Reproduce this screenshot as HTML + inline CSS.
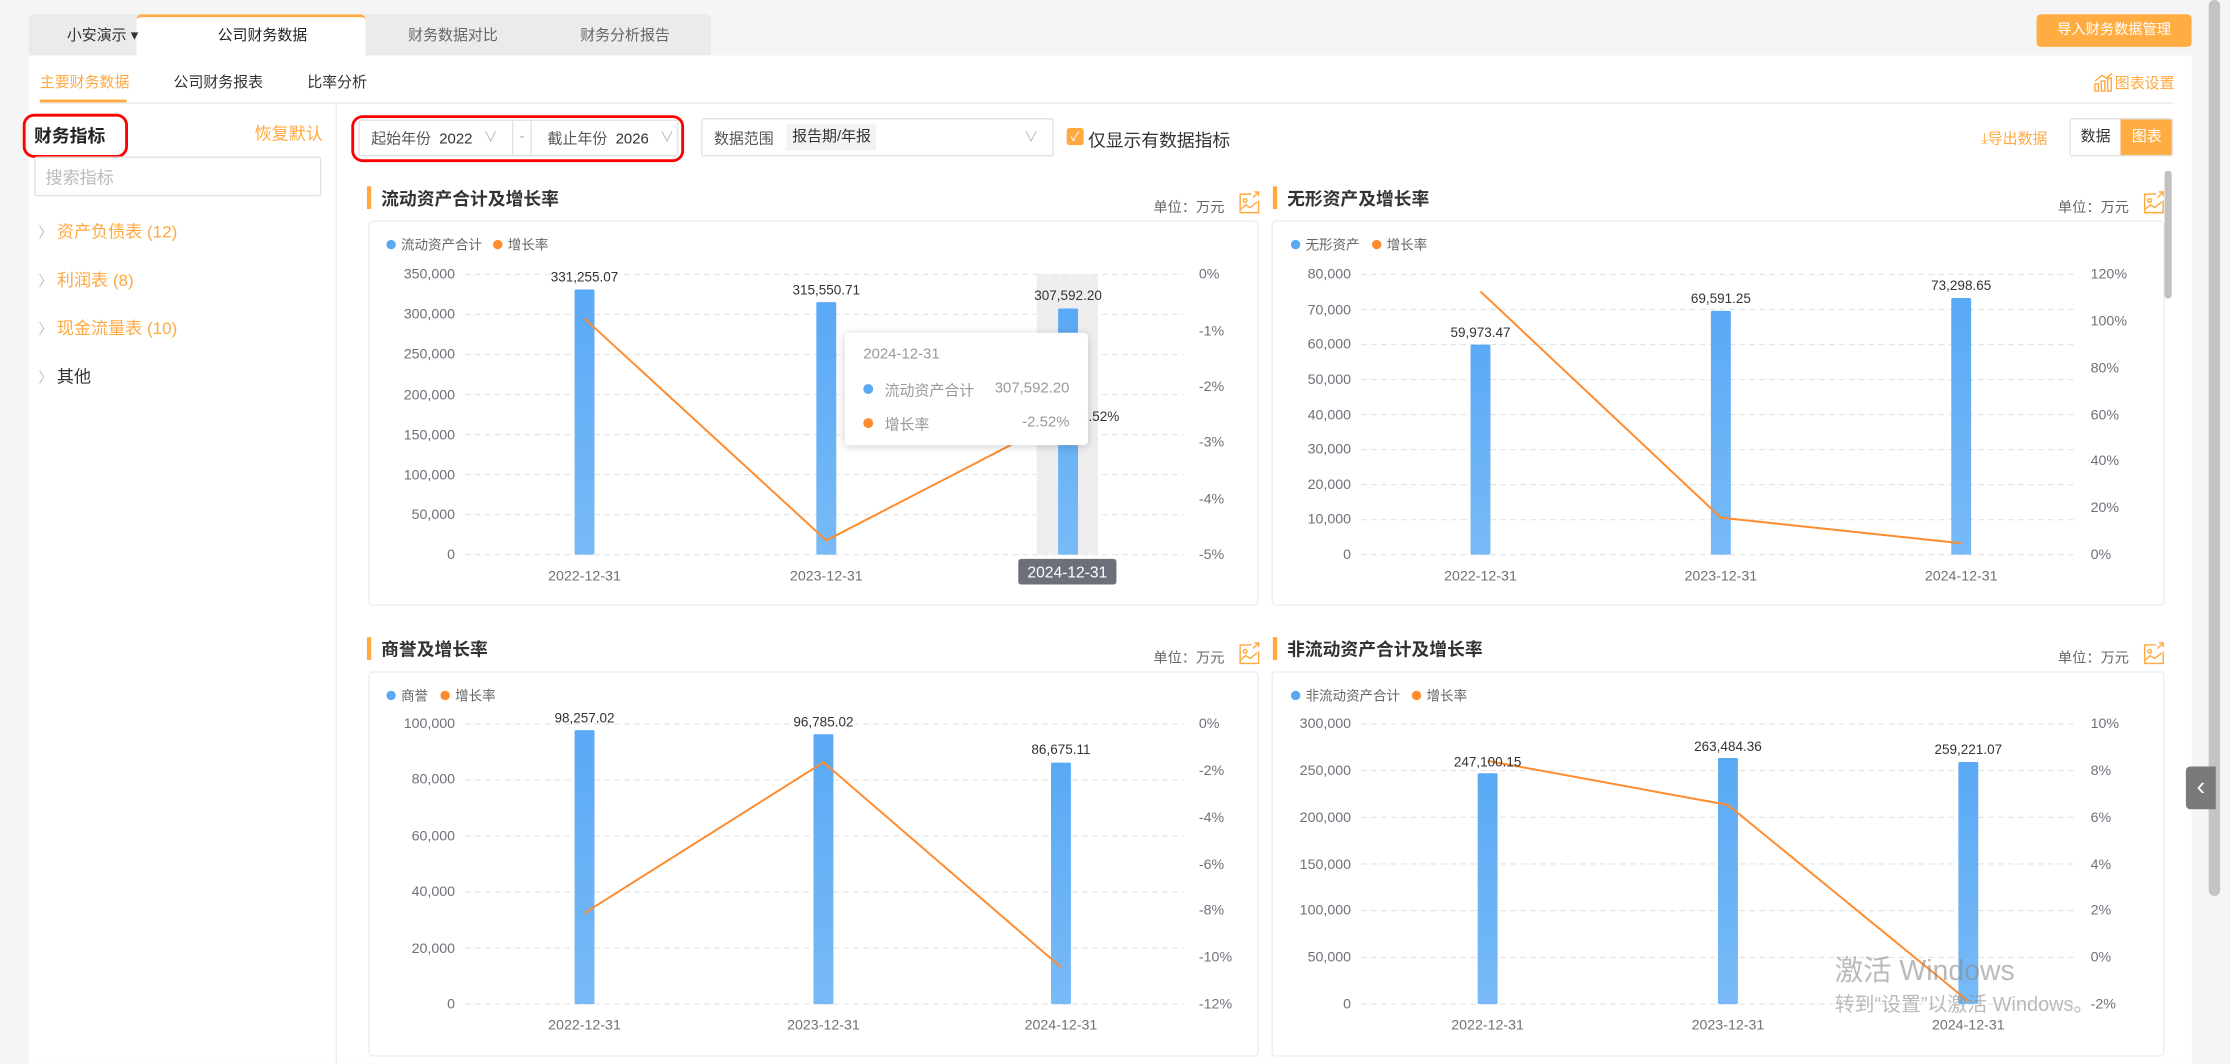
<!DOCTYPE html>
<html><head><meta charset="utf-8"><style>
*{margin:0;padding:0;box-sizing:border-box}
html,body{width:2230px;height:1064px;overflow:hidden;background:#f5f5f5}
#s{position:absolute;left:0;top:0;width:1568px;height:748px;transform:scale(1.42219);transform-origin:0 0;font-family:"Liberation Sans","Noto Sans CJK SC",sans-serif;color:#333;font-size:11px}
.a{position:absolute;white-space:nowrap}
.o{color:#ffa940}
.ar{color:#bbb;font-size:10px;margin-right:3px}
</style></head><body><div id="s">
<div class="a" style="left:20px;top:10px;width:480px;height:29px;background:#ebebeb;border-radius:4px 4px 0 0"></div>
<div class="a" style="left:96px;top:10px;width:161px;height:29px;background:#fff;border-top:2px solid #ffa940;border-radius:4px 4px 0 0"></div>
<div class="a" style="left:47px;top:17px;font-size:10.5px">小安演示 ▾</div>
<div class="a" style="left:153px;top:17px;font-size:10.5px;color:#222">公司财务数据</div>
<div class="a" style="left:287px;top:17px;font-size:10.5px;color:#666">财务数据对比</div>
<div class="a" style="left:408px;top:17px;font-size:10.5px;color:#666">财务分析报告</div>
<div class="a" style="left:1432px;top:10px;width:109px;height:23px;background:#ffad42;border-radius:3px;color:#fff;font-size:10px;text-align:center;line-height:23px">导入财务数据管理</div>
<div class="a" style="left:20px;top:39px;width:1521px;height:709px;background:#fff"></div>
<div class="a" style="left:28px;top:72px;width:1500px;height:1px;background:#eaeaea"></div>
<div class="a o" style="left:28px;top:50px;font-size:10.5px">主要财务数据</div>
<div class="a" style="left:28px;top:70px;width:61px;height:2px;background:#ffa940"></div>
<div class="a" style="left:122px;top:50px;font-size:10.5px">公司财务报表</div>
<div class="a" style="left:216px;top:50px;font-size:10.5px">比率分析</div>
<svg class="a" style="left:1472px;top:51px" width="14" height="14" fill="none" stroke="#ffa940" stroke-width="1"><rect x="1" y="8" width="2.5" height="5"/><rect x="5.5" y="6" width="2.5" height="7"/><rect x="10" y="4" width="2.5" height="9"/><path d="M1 6L6 2L9 4L13 0.5"/></svg>
<div class="a o" style="left:1487px;top:51px;font-size:10.5px">图表设置</div>
<div class="a" style="left:236px;top:73px;width:1px;height:675px;background:#eee"></div>
<div class="a" style="left:24px;top:85px;font-size:12.5px;font-weight:bold;color:#222">财务指标</div>
<div class="a" style="left:16px;top:80px;width:74px;height:31px;border:2.5px solid #f00;border-radius:8px"></div>
<div class="a o" style="left:179px;top:85px;font-size:12px">恢复默认</div>
<div class="a" style="left:24px;top:110px;width:202px;height:28px;border:1px solid #e3e3e3;border-radius:2px;color:#bbb;padding:5px 7px;font-size:12px">搜索指标</div>
<div class="a" style="left:27px;top:154px;font-size:12px"><span class="ar">〉</span><span class="o">资产负债表 (12)</span></div>
<div class="a" style="left:27px;top:188px;font-size:12px"><span class="ar">〉</span><span class="o">利润表 (8)</span></div>
<div class="a" style="left:27px;top:222px;font-size:12px"><span class="ar">〉</span><span class="o">现金流量表 (10)</span></div>
<div class="a" style="left:27px;top:256px;font-size:12px"><span class="ar">〉</span><span>其他</span></div>
<div class="a" style="left:252px;top:84px;width:225px;height:26px;border:1px solid #e3e3e3;border-radius:2px"></div>
<div class="a" style="left:360px;top:84px;width:14px;height:26px;border-left:1px solid #e3e3e3;border-right:1px solid #e3e3e3;color:#bbb;text-align:center;line-height:24px">-</div>
<div class="a" style="left:261px;top:90px;font-size:10.5px;color:#555">起始年份 &nbsp;<span style="color:#333">2022</span></div>
<div class="a" style="left:340px;top:88px;font-size:10px;color:#bbb">∨</div>
<div class="a" style="left:385px;top:90px;font-size:10.5px;color:#555">截止年份 &nbsp;<span style="color:#333">2026</span></div>
<div class="a" style="left:464px;top:88px;font-size:10px;color:#bbb">∨</div>
<div class="a" style="left:247px;top:81px;width:234px;height:33px;border:2.5px solid #f00;border-radius:8px"></div>
<div class="a" style="left:493px;top:83px;width:248px;height:27px;border:1px solid #e3e3e3;border-radius:2px"></div>
<div class="a" style="left:502px;top:90px;font-size:10.5px;color:#555">数据范围</div>
<div class="a" style="left:553px;top:87px;height:19px;padding:0 4px;background:#f2f3f5;font-size:10.5px;line-height:19px">报告期/年报</div>
<div class="a" style="left:720px;top:88px;font-size:10px;color:#bbb">∨</div>
<div class="a" style="left:750px;top:90px;width:12px;height:12px;background:#ffa940;border-radius:2px;color:#fff;font-size:9px;text-align:center;line-height:12px">✓</div>
<div class="a" style="left:765px;top:88px;font-size:12.5px">仅显示有数据指标</div>
<div class="a o" style="left:1393px;top:90px;font-size:10.5px">⤓导出数据</div>
<div class="a" style="left:1455px;top:83px;width:73px;height:27px;border:1px solid #e3e3e3;border-radius:2px;overflow:hidden"><div class="a" style="left:0;top:0;width:35px;height:25px;text-align:center;line-height:25px;font-size:10.5px">数据</div><div class="a" style="left:35px;top:0;width:37px;height:25px;background:#ffad42;color:#fff;text-align:center;line-height:25px;font-size:10.5px">图表</div></div>
<div class="a" style="left:258px;top:131px;width:3px;height:16px;background:#ffa940"></div>
<div class="a" style="left:268px;top:129px;font-size:12.5px;font-weight:bold">流动资产合计及增长率</div>
<div class="a" style="left:895px;top:131px;width:3px;height:16px;background:#ffa940"></div>
<div class="a" style="left:905px;top:129px;font-size:12.5px;font-weight:bold">无形资产及增长率</div>
<div class="a" style="left:258px;top:448px;width:3px;height:16px;background:#ffa940"></div>
<div class="a" style="left:268px;top:446px;font-size:12.5px;font-weight:bold">商誉及增长率</div>
<div class="a" style="left:895px;top:448px;width:3px;height:16px;background:#ffa940"></div>
<div class="a" style="left:905px;top:446px;font-size:12.5px;font-weight:bold">非流动资产合计及增长率</div>
<div class="a" style="left:811px;top:137px;font-size:10px;color:#666">单位：万元</div>
<div class="a" style="left:1447px;top:137px;font-size:10px;color:#666">单位：万元</div>
<div class="a" style="left:811px;top:454px;font-size:10px;color:#666">单位：万元</div>
<div class="a" style="left:1447px;top:454px;font-size:10px;color:#666">单位：万元</div>
<svg class="a" style="left:871px;top:134px" width="15" height="17" fill="none" stroke="#ffa940" stroke-width="1"><path d="M9 2.5H1V15.5H14V7"/><path d="M10 5L14 1M11 1H14V4"/><circle cx="4.5" cy="7" r="1.3"/><path d="M1.5 13L5 10L8 12L13 8"/></svg>
<svg class="a" style="left:1507px;top:134px" width="15" height="17" fill="none" stroke="#ffa940" stroke-width="1"><path d="M9 2.5H1V15.5H14V7"/><path d="M10 5L14 1M11 1H14V4"/><circle cx="4.5" cy="7" r="1.3"/><path d="M1.5 13L5 10L8 12L13 8"/></svg>
<svg class="a" style="left:871px;top:451px" width="15" height="17" fill="none" stroke="#ffa940" stroke-width="1"><path d="M9 2.5H1V15.5H14V7"/><path d="M10 5L14 1M11 1H14V4"/><circle cx="4.5" cy="7" r="1.3"/><path d="M1.5 13L5 10L8 12L13 8"/></svg>
<svg class="a" style="left:1507px;top:451px" width="15" height="17" fill="none" stroke="#ffa940" stroke-width="1"><path d="M9 2.5H1V15.5H14V7"/><path d="M10 5L14 1M11 1H14V4"/><circle cx="4.5" cy="7" r="1.3"/><path d="M1.5 13L5 10L8 12L13 8"/></svg>
<div class="a" style="left:259px;top:155px;width:626px;height:271px;border:1px solid #ebeef5;border-radius:3px"></div>
<div class="a" style="left:894px;top:155px;width:628px;height:271px;border:1px solid #ebeef5;border-radius:3px"></div>
<div class="a" style="left:259px;top:472px;width:626px;height:271px;border:1px solid #ebeef5;border-radius:3px"></div>
<div class="a" style="left:894px;top:472px;width:628px;height:271px;border:1px solid #ebeef5;border-radius:3px"></div>
<div class="a" style="left:1522px;top:120px;width:5px;height:90px;background:#c1c1c1;border-radius:3px"></div>
<svg class="a" style="left:0;top:0" width="1568" height="748" font-family="Liberation Sans,Noto Sans CJK SC,sans-serif">
<defs><linearGradient id="g" x1="0" y1="0" x2="0" y2="1"><stop offset="0" stop-color="#5aa9f5"/><stop offset="1" stop-color="#78baf7"/></linearGradient></defs>
<g stroke="#e3e3e3" stroke-dasharray="4 3" stroke-width="0.8">
<path d="M327 193H832M327 221.1H832M327 249.3H832M327 277.4H832M327 305.6H832M327 333.7H832M327 361.9H832M327 390H832"/>
<path d="M957 193H1460M957 217.6H1460M957 242.3H1460M957 266.9H1460M957 291.5H1460M957 316.1H1460M957 340.8H1460M957 365.4H1460M957 390H1460"/>
<path d="M327 509H832M327 548.4H832M327 587.8H832M327 627.2H832M327 666.6H832M327 706H832"/>
<path d="M957 509H1460M957 541.8H1460M957 574.7H1460M957 607.5H1460M957 640.3H1460M957 673.2H1460M957 706H1460"/>
</g>
<g font-size="10" fill="#6e7079" text-anchor="end">
<text x="320" y="196">350,000</text><text x="320" y="224">300,000</text><text x="320" y="252">250,000</text><text x="320" y="281">200,000</text><text x="320" y="309">150,000</text><text x="320" y="337">100,000</text><text x="320" y="365">50,000</text><text x="320" y="393">0</text>
<text x="950" y="196">80,000</text><text x="950" y="221">70,000</text><text x="950" y="245">60,000</text><text x="950" y="270">50,000</text><text x="950" y="295">40,000</text><text x="950" y="319">30,000</text><text x="950" y="344">20,000</text><text x="950" y="368">10,000</text><text x="950" y="393">0</text>
<text x="320" y="512">100,000</text><text x="320" y="551">80,000</text><text x="320" y="591">60,000</text><text x="320" y="630">40,000</text><text x="320" y="670">20,000</text><text x="320" y="709">0</text>
<text x="950" y="512">300,000</text><text x="950" y="545">250,000</text><text x="950" y="578">200,000</text><text x="950" y="611">150,000</text><text x="950" y="643">100,000</text><text x="950" y="676">50,000</text><text x="950" y="709">0</text>
</g>
<g font-size="10" fill="#6e7079">
<text x="843" y="196">0%</text><text x="843" y="236">-1%</text><text x="843" y="275">-2%</text><text x="843" y="314">-3%</text><text x="843" y="354">-4%</text><text x="843" y="393">-5%</text>
<text x="1470" y="196">120%</text><text x="1470" y="229">100%</text><text x="1470" y="262">80%</text><text x="1470" y="295">60%</text><text x="1470" y="327">40%</text><text x="1470" y="360">20%</text><text x="1470" y="393">0%</text>
<text x="843" y="512">0%</text><text x="843" y="545">-2%</text><text x="843" y="578">-4%</text><text x="843" y="611">-6%</text><text x="843" y="643">-8%</text><text x="843" y="676">-10%</text><text x="843" y="709">-12%</text>
<text x="1470" y="512">10%</text><text x="1470" y="545">8%</text><text x="1470" y="578">6%</text><text x="1470" y="611">4%</text><text x="1470" y="643">2%</text><text x="1470" y="676">0%</text><text x="1470" y="709">-2%</text>
</g>
<rect x="729" y="193" width="43" height="197" fill="#eee"/>
<g fill="url(#g)">
<rect x="404" y="203.6" width="14" height="186.4" rx="1"/><rect x="574" y="212.4" width="14" height="177.6" rx="1"/><rect x="744" y="216.9" width="14" height="173.1" rx="1"/>
<rect x="1034" y="242.3" width="14" height="147.7" rx="1"/><rect x="1203" y="218.6" width="14" height="171.4" rx="1"/><rect x="1372" y="209.5" width="14" height="180.5" rx="1"/>
<rect x="404" y="513.4" width="14" height="192.6" rx="1"/><rect x="572" y="516.3" width="14" height="189.7" rx="1"/><rect x="739" y="536.2" width="14" height="169.8" rx="1"/>
<rect x="1039" y="543.7" width="14" height="162.3" rx="1"/><rect x="1208" y="533" width="14" height="173" rx="1"/><rect x="1377" y="535.8" width="14" height="170.2" rx="1"/>
</g>
<g fill="none" stroke="#ff8c2e" stroke-width="1.4">
<path d="M411 224L581 380L751 292"/><path d="M1041 205L1210 364L1379 382"/><path d="M411 642L579 536L746 680"/><path d="M1046 535L1215 566L1384 704"/>
</g>
<g font-size="9.5" fill="#333" text-anchor="middle">
<text x="411" y="198">331,255.07</text><text x="581" y="207">315,550.71</text><text x="751" y="211">307,592.20</text><text x="772" y="296">-2.52%</text>
<text x="1041" y="237">59,973.47</text><text x="1210" y="213">69,591.25</text><text x="1379" y="204">73,298.65</text>
<text x="411" y="508">98,257.02</text><text x="579" y="511">96,785.02</text><text x="746" y="530">86,675.11</text>
<text x="1046" y="539">247,100.15</text><text x="1215" y="528">263,484.36</text><text x="1384" y="530">259,221.07</text>
</g>
<g font-size="10" fill="#6e7079" text-anchor="middle">
<text x="411" y="408">2022-12-31</text><text x="581" y="408">2023-12-31</text>
<text x="1041" y="408">2022-12-31</text><text x="1210" y="408">2023-12-31</text><text x="1379" y="408">2024-12-31</text>
<text x="411" y="724">2022-12-31</text><text x="579" y="724">2023-12-31</text><text x="746" y="724">2024-12-31</text>
<text x="1046" y="724">2022-12-31</text><text x="1215" y="724">2023-12-31</text><text x="1384" y="724">2024-12-31</text>
</g>
<rect x="716" y="393" width="69" height="18" rx="2" fill="#6e7079"/>
<text x="750.5" y="406" font-size="11" fill="#fff" text-anchor="middle">2024-12-31</text>
<g font-size="9.5" fill="#666">
<circle cx="275" cy="172" r="3.3" fill="#5aa9f5"/><text x="282" y="175.5">流动资产合计</text><circle cx="350" cy="172" r="3.3" fill="#ff8c2e"/><text x="357" y="175.5">增长率</text>
<circle cx="911" cy="172" r="3.3" fill="#5aa9f5"/><text x="918" y="175.5">无形资产</text><circle cx="968" cy="172" r="3.3" fill="#ff8c2e"/><text x="975" y="175.5">增长率</text>
<circle cx="275" cy="489" r="3.3" fill="#5aa9f5"/><text x="282" y="492.5">商誉</text><circle cx="313" cy="489" r="3.3" fill="#ff8c2e"/><text x="320" y="492.5">增长率</text>
<circle cx="911" cy="489" r="3.3" fill="#5aa9f5"/><text x="918" y="492.5">非流动资产合计</text><circle cx="996" cy="489" r="3.3" fill="#ff8c2e"/><text x="1003" y="492.5">增长率</text>
</g>
<g fill="rgba(140,140,140,0.6)"><text x="1290" y="689" font-size="20">激活 Windows</text><text x="1290" y="711" font-size="14">转到“设置”以激活 Windows。</text></g>
</svg>
<div class="a" style="left:594px;top:234px;width:171px;height:79px;background:#fff;border-radius:3px;box-shadow:0 1px 6px rgba(0,0,0,.18);color:#999;font-size:10.5px">
<div class="a" style="left:13px;top:9px">2024-12-31</div>
<div class="a" style="left:13px;top:36px;width:7px;height:7px;border-radius:50%;background:#5aa9f5"></div>
<div class="a" style="left:28px;top:33px">流动资产合计</div><div class="a" style="right:13px;top:33px">307,592.20</div>
<div class="a" style="left:13px;top:60px;width:7px;height:7px;border-radius:50%;background:#ff8c2e"></div>
<div class="a" style="left:28px;top:57px">增长率</div><div class="a" style="right:13px;top:57px">-2.52%</div>
</div>
<div class="a" style="left:1553px;top:0;width:8px;height:630px;background:#c4c4c4;border-radius:4px"></div>
<div class="a" style="left:1537px;top:539px;width:21px;height:30px;background:#7a7a7a;border-radius:3px 0 0 3px;color:#fff;font-size:18px;text-align:center;line-height:28px">‹</div>
</div></body></html>
